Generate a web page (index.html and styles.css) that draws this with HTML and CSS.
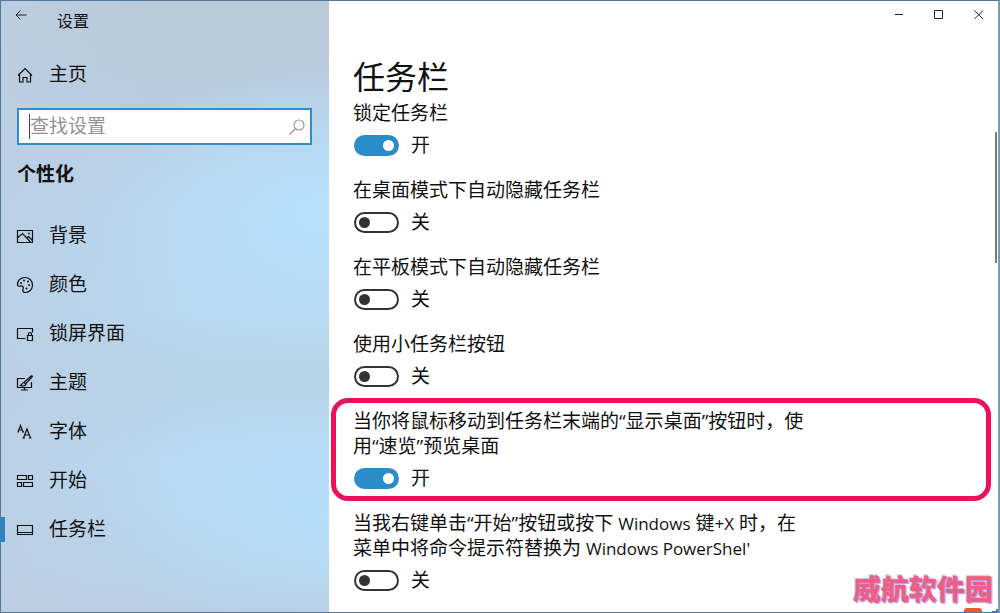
FILE: index.html
```html
<!DOCTYPE html>
<html lang="zh-CN">
<head>
<meta charset="utf-8">
<meta name="viewport" content="width=device-width, initial-scale=1">
<title>设置</title>
<link rel="stylesheet" href="styles.css">
</head>
<body>
<div class="window">
  <aside class="sidebar">
    <header class="titlebar">
      <button class="back" type="button" aria-label="返回">
        <svg class="glyph-s" viewBox="0 0 12 12"><path d="M11.5 6H1M5.5 1.5L1 6l4.500 4.500"/></svg>
      </button>
      <span class="app-name">设置</span>
    </header>
    <a class="nav-link home" href="#home">
      <svg class="icon" viewBox="0 0 18 18"><path d="M2 9.500L9 2.500l7 7M3.500 8.500v7.500h3.500v-4.500h4v4.500h3.500V8.500"/></svg>
      <span>主页</span>
    </a>
    <label class="search">
      <span class="caret"></span>
      <input class="search-input" type="text" placeholder="查找设置" aria-label="查找设置">
      <svg class="icon search-icon" viewBox="0 0 18 18"><circle cx="11" cy="7" r="5"/><path d="M7.500 10.500L1.500 16.500"/></svg>
    </label>
    <h2 class="category">个性化</h2>
    <nav class="nav">
      <a class="nav-link" href="#background">
        <svg class="icon" viewBox="0 0 18 18"><path d="M1.500 3.500h15v12h-15zM2 10.500l4.500-4 8 8.500M10.500 11l2-1.500 4 4"/><circle class="solid" cx="13" cy="6.500" r=".9"/></svg>
        <span>背景</span>
      </a>
      <a class="nav-link" href="#colors">
        <svg class="icon" viewBox="0 0 18 18"><path d="M1.500 9C1 4.500 5 1.500 9 1.500c4.500 0 7.500 3.500 7.500 7.500s-3 7.500-7 7.500c-2.500 0-3-1.500-2.500-3s.500-3-1-3.500c-1.500-.5-3.500 1.500-4.500-1z"/><g class="solid"><circle cx="5" cy="7" r="1"/><circle cx="8" cy="4.500" r="1"/><circle cx="12" cy="5.500" r="1"/><circle cx="13" cy="9" r="1"/><circle cx="10.500" cy="12.500" r="1"/></g></svg>
        <span>颜色</span>
      </a>
      <a class="nav-link" href="#lockscreen">
        <svg class="icon" viewBox="0 0 18 18"><path d="M9.500 13.500h-8v-10h15v4M11.500 10.500h5v5h-5zM12.500 10.500V9c0-2 3-2 3 0v1.500"/></svg>
        <span>锁屏界面</span>
      </a>
      <a class="nav-link" href="#themes">
        <svg class="icon" viewBox="0 0 18 18"><path d="M9 4.500H1.500v9h14V8M5 16h7M8.500 13.500V16M8 8.500l7-6.500c1.500-.5 1.500.5 1 1l-6.500 7zM8 8.500c-2 0-2 2.500-3.500 3 2.500 1 5 .5 5.500-1.500z"/></svg>
        <span>主题</span>
      </a>
      <a class="nav-link" href="#fonts">
        <svg class="icon" viewBox="0 0 18 18"><path d="M2 9l2.500-6.500L7 9M3 7h3M7.500 15l3.500-9 3.500 9M9 12h4M1.500 9h1.500M6 9h2M6.500 15h2.500M13 15h2.500"/></svg>
        <span>字体</span>
      </a>
      <a class="nav-link" href="#start">
        <svg class="icon" viewBox="0 0 18 18"><path d="M1.500 3.500h9v4h-9zM12.500 3.500h4v4h-4zM1.500 10.500h4v4h-4zM7.500 10.500h9v4h-9z"/></svg>
        <span>开始</span>
      </a>
      <a class="nav-link current" href="#taskbar" aria-current="page">
        <svg class="icon" viewBox="0 0 18 18"><path d="M1.500 4.500h15v9h-15zM1.500 11.500h15"/></svg>
        <span>任务栏</span>
      </a>
    </nav>
  </aside>
  <main class="content">
    <div class="controls">
      <button class="control" type="button" aria-label="最小化"><svg class="glyph-s" viewBox="0 0 12 12"><path d="M2 5.500h8"/></svg></button>
      <button class="control" type="button" aria-label="最大化"><svg class="glyph-s" viewBox="0 0 12 12"><path d="M1.500 1.500h8v8h-8z"/></svg></button>
      <button class="control" type="button" aria-label="关闭"><svg class="glyph-s" viewBox="0 0 12 12"><path d="M1.500 1.500l8.500 8.500M10 1.500L1.500 10"/></svg></button>
    </div>
    <h1 class="page-title">任务栏</h1>
    <div class="settings">
      <div class="setting">
        <label for="lock">锁定任务栏</label>
        <div class="row"><input class="toggle" id="lock" type="checkbox" checked><span>开</span></div>
      </div>
      <div class="setting">
        <label for="desk">在桌面模式下自动隐藏任务栏</label>
        <div class="row"><input class="toggle" id="desk" type="checkbox"><span>关</span></div>
      </div>
      <div class="setting">
        <label for="tablet">在平板模式下自动隐藏任务栏</label>
        <div class="row"><input class="toggle" id="tablet" type="checkbox"><span>关</span></div>
      </div>
      <div class="setting">
        <label for="small">使用小任务栏按钮</label>
        <div class="row"><input class="toggle" id="small" type="checkbox"><span>关</span></div>
      </div>
      <div class="setting marked">
        <label for="peek">当你将鼠标移动到任务栏末端的“显示桌面”按钮时，使<br>用“速览”预览桌面</label>
        <div class="row"><input class="toggle" id="peek" type="checkbox" checked><span>开</span></div>
      </div>
      <div class="setting">
        <label for="shell">当我右键单击“开始”按钮或按下 <span class="latin">Windows</span> 键<span class="latin">+X</span> 时，在<br>菜单中将命令提示符替换为 <span class="latin">Windows PowerShel'</span></label>
        <div class="row"><input class="toggle" id="shell" type="checkbox"><span>关</span></div>
      </div>
    </div>
    <div class="scrollbar"></div>
  </main>
  <div class="corner">
    <span class="watermark">威航软件园</span>
    <svg class="badge" viewBox="0 0 46 6"><rect x="10" y="1" width="18" height="8" rx="3" fill="#f0592b" stroke="none"/><path d="M38 5h8M43 2v4" stroke="#4a6fd0" stroke-width="2"/></svg>
  </div>
</div>
</body>
</html>
```

FILE: styles.css
```css
* {
  box-sizing: border-box;
}

body {
  margin: 0;
  font-family: "Open Sans", "Noto Sans CJK SC", sans-serif;
  font-size: 19px;
  line-height: 25px;
  color: #111;
}

.window {
  position: relative;
  display: flex;
  min-height: 100vh;
  border: 1px solid #54789a;
  border-right: 2px solid #7b9ca8;
  background: #fff;
  overflow: hidden;
}

svg {
  fill: none;
  stroke: currentColor;
}

.solid {
  fill: currentColor;
  stroke: none;
}

.icon {
  flex: none;
  width: 18px;
  height: 18px;
  stroke-width: 1.2;
}

.glyph-s {
  display: block;
  width: 12px;
  height: 12px;
}

button {
  padding: 0;
  border: 0;
  background: none;
  color: #222;
}

.sidebar {
  flex: none;
  width: 328px;
  background:
    radial-gradient(ellipse 230px 150px at 100% 34%, rgba(182, 226, 255, 0.9), rgba(182, 226, 255, 0)),
    radial-gradient(ellipse 230px 130px at 100% 84%, rgba(181, 223, 252, 0.9), rgba(181, 223, 252, 0)),
    linear-gradient(90deg, rgba(188, 206, 226, 0.8), rgba(184, 214, 240, 0) 60%),
    linear-gradient(#bac9d7, #b9cbdd 14%, #b9d6ef 34%, #b8d9f3 50%, #b7d3e7 62%, #b8d9f5 76%, #b8d3e8 93%, #bacde3);
}

.titlebar {
  display: flex;
  gap: 29px;
  height: 49px;
  padding: 8px 0 0 14px;
}

.back {
  width: 13px;
  height: 12px;
}

.app-name {
  font-size: 16px;
}

.nav-link {
  position: relative;
  display: flex;
  align-items: center;
  gap: 15px;
  height: 49px;
  padding-left: 15px;
  color: #111;
  text-decoration: none;
}

.current::before {
  content: "";
  position: absolute;
  left: 0;
  width: 4px;
  height: 25px;
  background: #2488c8;
}

.search {
  display: flex;
  align-items: center;
  height: 37px;
  margin: 9px 17px 0 16px;
  padding: 0 4px 0 10px;
  border: 2px solid #2f8fc6;
  background: #fff;
}

.caret {
  width: 1px;
  height: 25px;
  background: #444;
}

.search-input {
  flex: 1;
  min-width: 0;
  padding: 0;
  border: 0;
  outline: 0;
  background: none;
  font: inherit;
}

.search-input::placeholder {
  color: #929292;
  opacity: 1;
}

.search-icon {
  color: #999;
}

.category {
  margin: 17px 16px 24px;
  font-size: 19px;
  line-height: 25px;
}

.content {
  position: relative;
  flex: 1;
  min-width: 0;
  padding: 0 24px 20px;
}

.controls {
  display: flex;
  justify-content: flex-end;
  gap: 28px;
  margin-right: -11px;
  padding-top: 8px;
}

.page-title {
  margin: 34px 0 2px;
  font-size: 32px;
  line-height: 44px;
  font-weight: 400;
}

.settings {
  display: grid;
  gap: 21px;
}

.setting {
  position: relative;
  display: grid;
  gap: 8px;
}

.marked::before {
  content: "";
  position: absolute;
  inset: -11px -17px -11px -22px;
  border: 5px solid #ea125f;
  border-radius: 17px;
  pointer-events: none;
}

.latin {
  font-size: 17px;
}

.row {
  display: flex;
  align-items: center;
  gap: 12px;
  height: 23px;
  padding-left: 1px;
}

.toggle {
  appearance: none;
  display: flex;
  align-items: center;
  width: 45px;
  height: 21px;
  margin: 0;
  padding: 0 3px;
  border: 2px solid #333;
  border-radius: 11px;
  background: #fff;
}

.toggle::before {
  content: "";
  width: 11px;
  height: 11px;
  border-radius: 50%;
  background: #333;
}

.toggle:checked {
  justify-content: flex-end;
  border-color: #2a8cc9;
  background: #2a8cc9;
}

.toggle:checked::before {
  background: #fff;
}

.scrollbar {
  position: absolute;
  top: 131px;
  right: 1px;
  width: 2px;
  height: 131px;
  background: #747c80;
}

.corner {
  position: absolute;
  right: -2px;
  bottom: -1px;
  display: flex;
  flex-direction: column;
  align-items: flex-end;
  justify-content: flex-end;
  width: 46px;
  height: 88px;
  background: #fff;
}

.watermark {
  padding-right: 7px;
  font-size: 28px;
  line-height: 36px;
  font-weight: 900;
  color: #ee6080;
  white-space: nowrap;
  text-shadow: 1px 1px 1px #a89cf8, -1px -1px 1px #c4bcfc;
}

.badge {
  width: 46px;
  height: 6px;
}
```
